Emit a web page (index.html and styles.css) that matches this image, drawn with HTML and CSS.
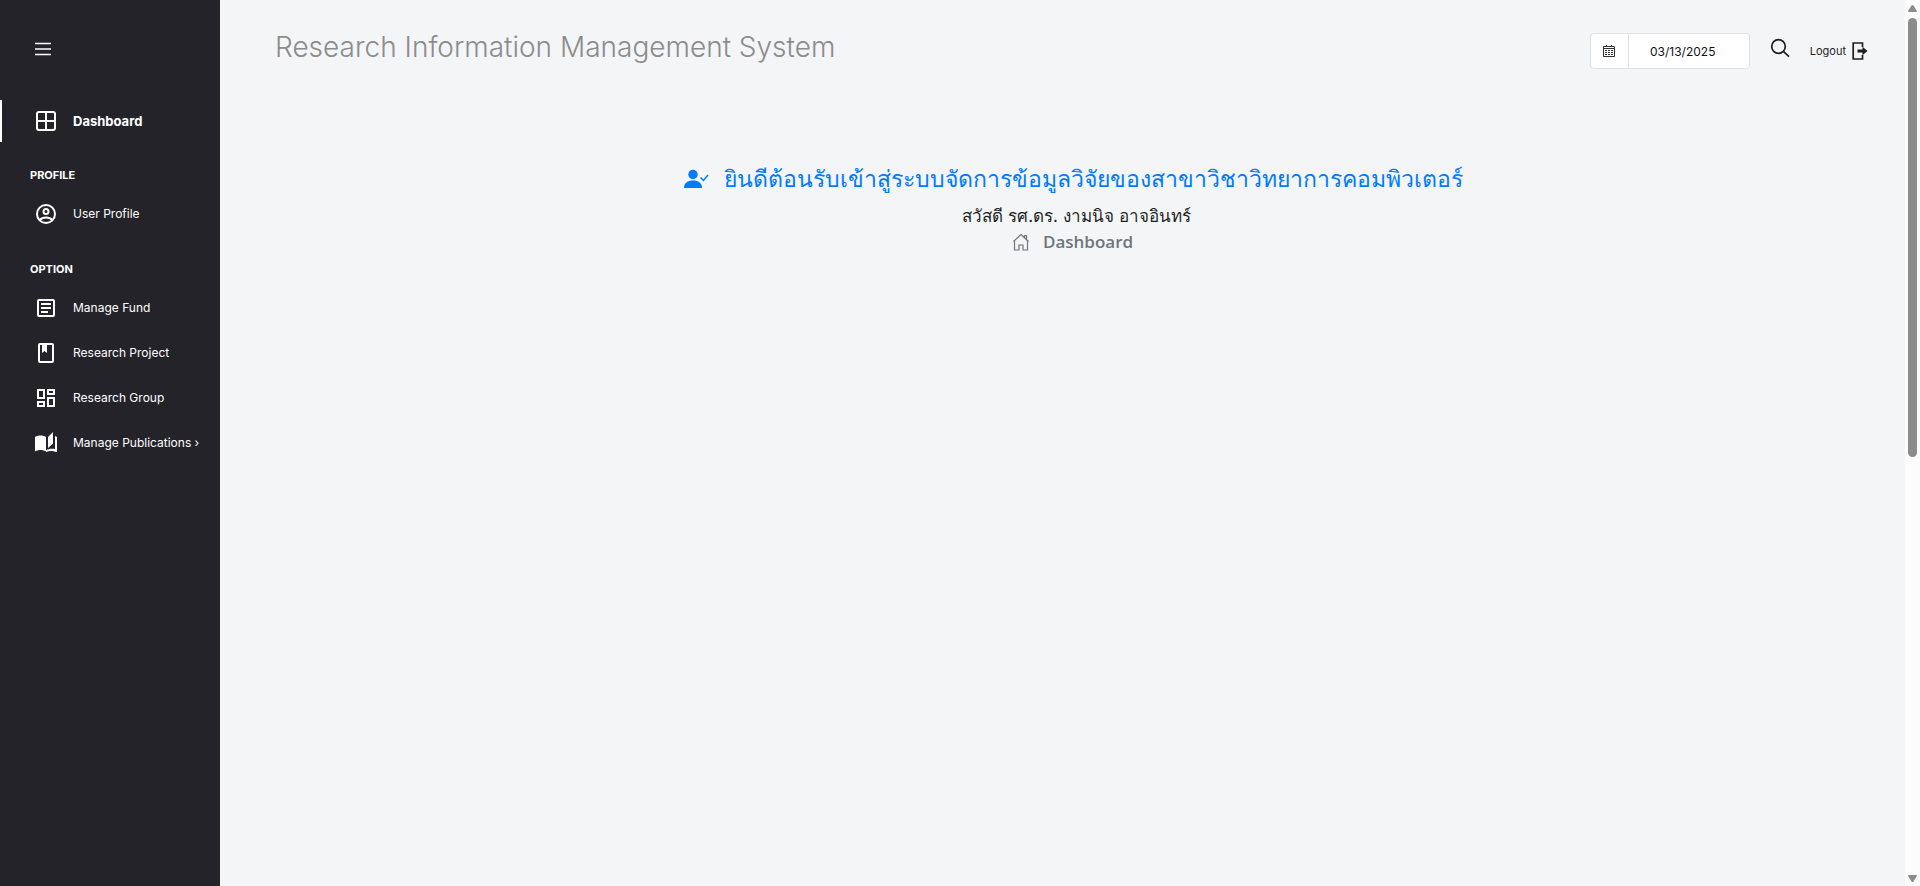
FILE: index.html
```html
<!DOCTYPE html>
<html lang="en">
<head>
<meta charset="utf-8">
<title>Research Information Management System</title>
<link rel="stylesheet" href="styles.css">
</head>
<body>
<div class="app">
  <aside class="sidebar">
    <button class="menu-toggle" aria-label="Toggle menu">
      <svg width="18" height="16" viewBox="0 0 18 16" stroke="#fff" stroke-width="1.4"><path d="M1 2.500h16M1 8h16M1 13.500h16"/></svg>
    </button>
    <nav class="nav">
      <a class="nav-item active" href="#">
        <svg class="nav-icon" viewBox="0 0 24 24" fill="none" stroke="#fff" stroke-width="2"><rect x="3" y="3" width="18" height="18" rx="2"/><path d="M12 3v18M3 12h18"/></svg>
        <span>Dashboard</span>
      </a>
      <h2 class="nav-heading">PROFILE</h2>
      <a class="nav-item" href="#">
        <svg class="nav-icon" viewBox="0 0 24 24" fill="none" stroke="#fff" stroke-width="2"><circle cx="12" cy="12" r="9"/><circle cx="12" cy="9.500" r="2.500"/><path d="M5.800 18c1.600-1.800 3.800-2.500 6.200-2.500s4.600.7 6.200 2.500"/></svg>
        <span>User Profile</span>
      </a>
      <h2 class="nav-heading">OPTION</h2>
      <a class="nav-item" href="#">
        <svg class="nav-icon" viewBox="0 0 24 24" fill="none" stroke="#fff" stroke-width="2"><rect x="4" y="4" width="16" height="16" rx="1"/><path d="M7 8h10M7 12h10M7 16h7"/></svg>
        <span>Manage Fund</span>
      </a>
      <a class="nav-item" href="#">
        <svg class="nav-icon" viewBox="0 0 24 24" fill="none" stroke="#fff" stroke-width="2"><rect x="5" y="3" width="14" height="18" rx="1"/><path d="M7 3h6v9l-2.500-2L8 12V3z" fill="#fff" stroke="none"/></svg>
        <span>Research Project</span>
      </a>
      <a class="nav-item" href="#">
        <svg class="nav-icon" viewBox="0 0 24 24" fill="none" stroke="#fff" stroke-width="2"><path d="M4 4h6v8H4zM14 4h6v4h-6zM4 16h6v4H4zM14 12h6v8h-6z"/></svg>
        <span>Research Group</span>
      </a>
      <a class="nav-item" href="#">
        <svg class="nav-icon" viewBox="0 0 24 24" fill="#fff"><path d="M1 6c3-2 8-2 11 0v14.500c-3-2-8-2-11 0zM19 1l-5 5v11l5-4.500zM21 5c.8.300 1.400.6 2 1v15h-1c-3-1.500-7-1.500-10 0v-1.800c2.500-1.500 6-1.900 9-1.200z"/></svg>
        <span>Manage Publications ›</span>
      </a>
    </nav>
  </aside>
  <div class="page">
    <header class="topbar">
      <h1 class="title">Research Information Management System</h1>
      <div class="tools">
        <div class="date-group">
          <label class="date-label" for="date" aria-label="Date">
            <svg width="14" height="14" viewBox="0 0 14 14" fill="none" stroke="#333"><path d="M1.500 2.500h11v10h-11zM1.500 4.500h11M4.500 1v2M9.500 1v2"/><path d="M3 6.500h8M3 8.500h8M3 10.500h8" stroke-dasharray="2 1"/></svg>
          </label>
          <input class="date-input" id="date" type="text" value="03/13/2025">
        </div>
        <button class="search" aria-label="Search">
          <svg width="20" height="20" viewBox="0 0 20 20" fill="none" stroke="#1f1f1f" stroke-width="1.700"><circle cx="8.500" cy="8.500" r="6.800"/><path d="M13.400 13.400l5.600 5.200"/></svg>
        </button>
        <a class="logout" href="#"><span>Logout</span>
          <svg width="16" height="18" viewBox="0 0 16 18" fill="none" stroke="#1f1f1f" stroke-width="1.700"><path d="M10.500 5V1H1.200v16h9.300v-4"/><path d="M5.500 7.500h5V4.800l5 4.200-5 4.200v-2.700h-5z" fill="#1f1f1f" stroke="none"/></svg>
        </a>
      </div>
    </header>
    <main class="welcome">
      <h3 class="welcome-title">
        <svg width="26" height="20" viewBox="0 0 26 20" fill="#007bff"><circle cx="10" cy="5.500" r="4.700"/><path d="M1 19c0-5 3.500-7.500 9-7.500s9 2.500 9 7.500z"/><path d="M17.500 8.500l3 3L25 6" fill="none" stroke="#007bff" stroke-width="1.500"/></svg>
        <span>ยินดีต้อนรับเข้าสู่ระบบจัดการข้อมูลวิจัยของสาขาวิชาวิทยาการคอมพิวเตอร์</span>
      </h3>
      <p class="greeting">สวัสดี รศ.ดร. งามนิจ อาจอินทร์</p>
      <p class="crumb">
        <svg width="18" height="18" viewBox="0 0 18 18" fill="none" stroke="#6c757d" stroke-width="1.200"><path d="M1.500 8.500L9 1.500l7.500 7M2.500 8v9h4.500v-5h4v5h4.500V8M12.500 4.500V2.500h2V6.500"/></svg>
        <span>Dashboard</span>
      </p>
    </main>
  </div>
  <div class="scrollbar" aria-hidden="true">
    <svg width="9" height="7" viewBox="0 0 9 7" fill="#8b8b8b"><path d="M4.500 0q.6 0 1 .6L8.900 6q.2 1-.7 1H.8q-.9 0-.7-1L3.500.6q.4-.6 1-.6z"/></svg>
    <div class="track"><div class="thumb"></div></div>
    <svg width="9" height="7" viewBox="0 0 9 7" fill="#8b8b8b"><path d="M4.500 7q.6 0 1-.6L8.900 1q.2-1-.7-1H.8Q-.1 0 .1 1l3.400 5.400q.4.6 1 .6z"/></svg>
  </div>
</div>
</body>
</html>
```
FILE: styles.css
```css
* { box-sizing: border-box; }
body {
  margin: 0;
  background: #f4f5f7;
  color: #1f1f1f;
  font-family: Inter, "Noto Sans", "Liberation Sans", sans-serif;
}
h1, h2, h3, p { margin: 0; }
a { color: inherit; text-decoration: none; }
button { padding: 0; border: 0; background: none; line-height: 0; }
svg { flex: none; }

.app { display: flex; min-height: 100vh; }

.sidebar { flex: 0 0 220px; background: #242329; color: #fff; }
.menu-toggle { display: block; margin: 41px 0 0 34px; }
.nav { margin-top: 43px; }
.nav-item {
  display: flex;
  align-items: center;
  gap: 15px;
  height: 45px;
  padding-left: 34px;
  font-size: 12px;
  white-space: nowrap;
}
.nav-item.active {
  height: 42px;
  margin-bottom: 24px;
  padding-left: 32px;
  border-left: 2px solid #fff;
  font-size: 13px;
  font-weight: 700;
}
.nav-icon { width: 24px; height: 24px; }
.nav-heading {
  padding-left: 30px;
  font-size: 11px;
  font-weight: 700;
  line-height: 18px;
}
.nav-heading + .nav-item { margin-top: 7px; }
.nav-item + .nav-heading { margin-top: 24px; }

.page { flex: 1; min-width: 0; }
.topbar {
  display: flex;
  justify-content: space-between;
  align-items: flex-start;
  padding: 27px 37px 0 55px;
}
.title { font-size: 28px; font-weight: 300; line-height: 40px; color: #8c8c8c; }
.tools { display: flex; align-items: center; gap: 20px; padding-top: 6px; }
.date-group {
  display: flex;
  width: 160px;
  height: 36px;
  border: 1px solid #dfe1e4;
  border-radius: 4px;
  background: #fff;
  overflow: hidden;
}
.date-label {
  display: flex;
  align-items: center;
  justify-content: center;
  width: 38px;
  border-right: 1px solid #dfe1e4;
}
.date-input {
  flex: 1;
  min-width: 0;
  padding: 0 12px 0 0;
  border: 0;
  background: none;
  color: #111;
  font: 12px Inter, sans-serif;
  text-align: center;
}
.search { padding-bottom: 6px; }
.logout { display: flex; align-items: center; gap: 6px; font-size: 11px; }

.welcome {
  display: flex;
  flex-direction: column;
  align-items: center;
  padding: 93px 0 0 20px;
  white-space: nowrap;
}
.welcome-title {
  display: flex;
  align-items: center;
  gap: 15px;
  font-size: 23px;
  font-weight: 400;
  line-height: 34px;
  color: #007bff;
}
.greeting {
  margin-top: 6px;
  padding-left: 8px;
  font-size: 17px;
  line-height: 28px;
}
.crumb {
  display: flex;
  align-items: center;
  gap: 13px;
  font: 600 17px/24px "Open Sans", "Noto Sans", sans-serif;
  color: #6c757d;
}

.scrollbar {
  display: flex;
  flex: 0 0 15px;
  flex-direction: column;
  align-items: center;
  padding: 5px 0 4px;
  gap: 6px;
  background: #fcfcfc;
}
.track { flex: 1; width: 9px; }
.thumb { height: 51.6%; border-radius: 5px; background: #8b8b8b; }
```
